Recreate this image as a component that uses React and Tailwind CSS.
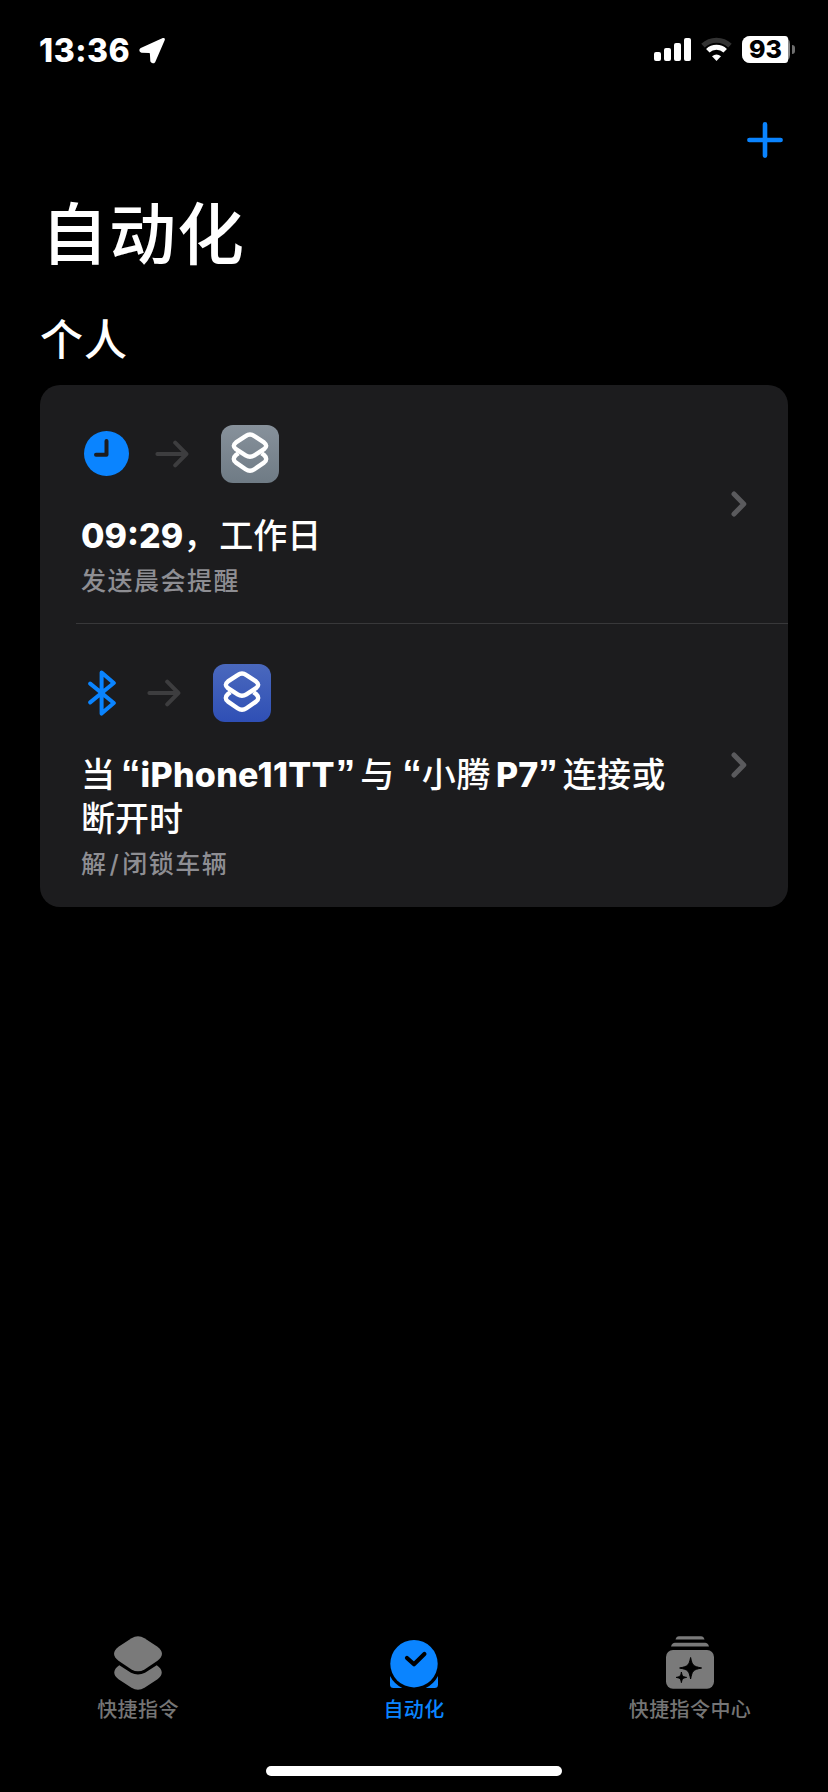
import React from 'react';

const signalBars = [
  { x: 0, y: 14, h: 9 },
  { x: 10, y: 10, h: 13 },
  { x: 20, y: 5, h: 18 },
  { x: 30, y: 0, h: 23 },
];

function StatusBar() {
  return (
    <header className="flex h-[100px] items-start justify-between pl-[39px] pr-[33px]">
      <div className="flex items-center pt-[31px]">
        <span className="w-[100px] whitespace-nowrap text-[32px] font-extrabold leading-10 tracking-[0.5px]">13:36</span>
        <svg className="mb-[2px]" width="27" height="27" viewBox="0 0 27 27" fill="#fff" stroke="#fff" strokeWidth="3" strokeLinejoin="round">
          <path d="M24.4 2.4 L2.4 12.4 Q1.2 13.6 2.6 14.2 L10.4 14.6 Q12.2 14.8 12.4 16.6 L12.8 24 Q13.8 25.6 15 24.2 Z" />
        </svg>
      </div>
      <div className="flex items-start pt-9">
        <svg className="mt-[2px]" width="37" height="23" viewBox="0 0 37 23" fill="#fff">
          {signalBars.map((bar) => (
            <rect key={bar.x} x={bar.x} y={bar.y} width="7" height={bar.h} rx="2" />
          ))}
        </svg>
        <svg className="ml-[10px] mt-[1px]" width="31" height="25" viewBox="0 0 31 25" fill="none">
          <path d="M2 8.6 A19.5 19.5 0 0 1 29 8.6" stroke="#333" strokeWidth="5" />
          <path d="M6.8 13.8 A12.6 12.6 0 0 1 24.2 13.8" stroke="#fff" strokeWidth="5" />
          <path d="M11 19.2 Q15.5 15.6 20 19.2 L15.5 24 Z" fill="#fff" />
        </svg>
        <div className="ml-[10px] flex h-[27px] w-[48px] rounded-[8px] bg-[#8a8a8a]">
          <span className="flex w-[46px] items-center justify-center rounded-l-[8px] rounded-r-[3px] bg-white pl-[1px] text-[25px] font-extrabold leading-[27px] text-black">93</span>
        </div>
        <div className="ml-[2px] mt-[9px] h-[9px] w-[3px] rounded-r-full bg-[#6e6e6e]" />
      </div>
    </header>
  );
}

function ArrowIcon() {
  return (
    <svg width="34" height="28" viewBox="0 0 34 28" fill="none" stroke="#3d3d3f" strokeWidth="4" strokeLinecap="round" strokeLinejoin="round">
      <path d="M2.4 14 H31 M20.2 2.7 L31.4 14 L20.2 25.3" />
    </svg>
  );
}

function ClockIcon() {
  return (
    <svg className="mb-px" width="45" height="45" viewBox="0 0 45 45" fill="none">
      <circle cx="22.5" cy="22.5" r="22.5" fill="#0a84ff" />
      <path d="M22.5 10 V23.8 H12" stroke="#1c1c1e" strokeWidth="4" strokeLinecap="round" strokeLinejoin="round" />
    </svg>
  );
}

function BluetoothIcon() {
  return (
    <svg width="28" height="46" viewBox="0 0 28 46" fill="none" stroke="#0a84ff" strokeWidth="4" strokeLinecap="round" strokeLinejoin="round">
      <path d="M2.2 13.6 L25.8 33 L13.6 43.6 V2.4 L25.8 13 L2.2 32.4" />
    </svg>
  );
}

function ShortcutBadge({ className }) {
  return (
    <div className={`flex size-[58px] items-center justify-center rounded-[12px] ${className}`}>
      <svg className="mb-[2px]" width="38" height="42" viewBox="0 0 38 42" fill="none" stroke="#fff" strokeWidth="4.4" strokeLinejoin="round">
        <path d="M7.4 21.2 L5 23 Q0.6 27 5 30.6 L14.6 37.2 Q19 40.4 23.4 37.2 L33 30.6 Q37.4 27 33 23 L30.6 21.2" />
        <path d="M14.6 4.1 Q19 1 23.4 4.1 L33 10.4 Q37.4 13.8 33 17.2 L23.4 23.4 Q19 26.2 14.6 23.4 L5 17.2 Q0.6 13.8 5 10.4 Z" />
      </svg>
    </div>
  );
}

function Chevron() {
  return (
    <svg width="16" height="26" viewBox="0 0 16 26" fill="none" stroke="#5a5a5d" strokeWidth="5" strokeLinecap="round" strokeLinejoin="round">
      <path d="M3 3 L12.8 13 L3 23" />
    </svg>
  );
}

function Quote({ children, className }) {
  return (
    <span className={`font-['Liberation_Sans',sans-serif] text-[39px] font-bold leading-none ${className}`}>{children}</span>
  );
}

function AutomationRow({ icon, badge, title, subtitle }) {
  return (
    <div className="flex items-center px-[41px]">
      <div className="min-w-0 flex-1 pt-10 pb-6">
        <div className="flex h-[58px] items-center">
          {icon}
          <ArrowIcon />
          <ShortcutBadge className={badge} />
        </div>
        <div className="mt-[31px] whitespace-nowrap text-[34px] font-medium leading-[44px]">{title}</div>
        <div className="mt-[5px] text-[25px] font-medium leading-9 tracking-[1.5px] text-[#8e8e93]">{subtitle}</div>
      </div>
      <Chevron />
    </div>
  );
}

function ShortcutsTabIcon() {
  return (
    <svg width="48" height="54" viewBox="0 0 48 54" fill="#7a7a7a">
      <path d="M17.5 2.2 Q24 -1.8 30.5 2.2 L43.5 10.8 Q52.4 17.6 43.5 24.8 L30.5 33.4 Q24 37.2 17.5 33.4 L4.5 24.8 Q-4.4 17.6 4.5 10.8 Z" />
      <path d="M5.3 29.2 L17 36.8 Q24 40.4 31 36.8 L42.7 29.2 Q52.4 36 43.5 43.2 L30.5 51.8 Q24 55.8 17.5 51.8 L4.5 43.2 Q-4.4 36 5.3 29.2 Z" />
    </svg>
  );
}

function AutomationTabIcon() {
  return (
    <svg className="mb-[2px]" width="48" height="48" viewBox="0 0 48 48" fill="#0a84ff">
      <rect y="30" width="48" height="18" rx="3.5" />
      <circle cx="24" cy="23.7" r="27" fill="#000" />
      <circle cx="24" cy="23.7" r="23.7" />
      <path d="M17 18 L24 24.3 L34.4 14" fill="none" stroke="#000" strokeWidth="4.2" strokeLinecap="round" strokeLinejoin="round" />
    </svg>
  );
}

function GalleryTabIcon() {
  return (
    <svg className="mb-px" width="48" height="53" viewBox="0 0 48 53" fill="#7a7a7a">
      <path d="M9.5 3.6 Q10.3 0.2 13 0.2 H35 Q37.7 0.2 38.5 3.6 Z" />
      <path d="M5 10.4 Q6 6.8 9 6.8 H39 Q42 6.8 43 10.4 Z" />
      <rect y="14" width="48" height="38.7" rx="7" />
      <path d="M24.6 21.5 C26.3 29.5 27 30.2 35.6 32 C27 33.8 26.3 34.5 24.6 43 C22.9 34.5 22.2 33.8 13.6 32 C22.2 30.2 22.9 29.5 24.6 21.5 Z" fill="#000" stroke="#000" />
      <path d="M15.4 36 C16.2 40.2 16.6 40.6 20.6 41.4 C16.6 42.2 16.2 42.6 15.4 46.6 C14.6 42.6 14.2 42.2 10.2 41.4 C14.2 40.6 14.6 40.2 15.4 36 Z" fill="#000" stroke="#000" />
    </svg>
  );
}

const tabs = [
  { label: '快捷指令', icon: <ShortcutsTabIcon />, color: 'text-[#757575]' },
  { label: '自动化', icon: <AutomationTabIcon />, color: 'text-[#0a84ff]' },
  { label: '快捷指令中心', icon: <GalleryTabIcon />, color: 'text-[#757575]' },
];

export default function App() {
  return (
    <div className="flex h-[1792px] w-[828px] flex-col bg-black font-['Inter','Noto_Sans_CJK_SC',sans-serif] text-white" lang="zh-CN">
      <StatusBar />

      <div className="flex h-20 items-center justify-end pr-[45px]">
        <svg width="36" height="36" viewBox="0 0 36 36" stroke="#0a84ff" strokeWidth="4.6" strokeLinecap="round">
          <path d="M18 2.4 V33.6 M2.4 18 H33.6" />
        </svg>
      </div>

      <h1 className="mt-[2px] h-[106px] pl-[41px] text-[67px] font-medium leading-[106px] tracking-[1px]">自动化</h1>
      <h2 className="mt-[20px] h-[64px] pl-[40px] text-[43px] font-medium leading-[64px] tracking-[1px]">个人</h2>

      <main className="mx-10 mt-[13px] h-[522px] rounded-[20px] bg-[#1c1c1e]">
        <AutomationRow
          icon={<div className="mr-[26px] ml-[3px]"><ClockIcon /></div>}
          badge="ml-[32px] bg-linear-to-b from-[#87919b] to-[#6f7b85]"
          title={
            <>
              <span className="font-extrabold">09:29</span>
              <span className="tracking-[2px]">，</span>
              <span>工作日</span>
            </>
          }
          subtitle="发送晨会提醒"
        />
        <div className="ml-9 h-px bg-[#38383a]" />
        <AutomationRow
          icon={<div className="mr-[31px] ml-[7px]"><BluetoothIcon /></div>}
          badge="ml-[32px] bg-linear-to-b from-[#4a68bd] to-[#2f4fb5]"
          title={
            <>
              <span>当</span>
              <Quote className="ml-[6px]">“</Quote>
              <span className="font-extrabold tracking-[0.3px]">iPhone11TT</span>
              <Quote className="ml-px">”</Quote>
              <span className="ml-[5px]">与</span>
              <Quote className="ml-[8px]">“</Quote>
              <span className="tracking-[0.6px]">小腾</span>
              <span className="ml-[5px] font-extrabold">P7</span>
              <Quote>”</Quote>
              <span className="ml-[5px] tracking-[0.4px]">连接或</span>
              <br />
              <span>断开时</span>
            </>
          }
          subtitle={<>解<span className="mx-[2px]">/</span>闭锁车辆</>}
        />
      </main>

      <nav className="mt-auto grid h-[130px] grid-cols-3">
        {tabs.map((tab) => (
          <div key={tab.label} className={`flex flex-col items-center ${tab.color}`}>
            <div className="flex h-[54px] items-end">{tab.icon}</div>
            <span className="mt-[5px] text-[20px] font-medium leading-[30px] tracking-[0.4px]">{tab.label}</span>
          </div>
        ))}
      </nav>
      <div className="mx-auto mb-4 h-[10px] w-[296px] shrink-0 rounded-full bg-white" />
    </div>
  );
}
